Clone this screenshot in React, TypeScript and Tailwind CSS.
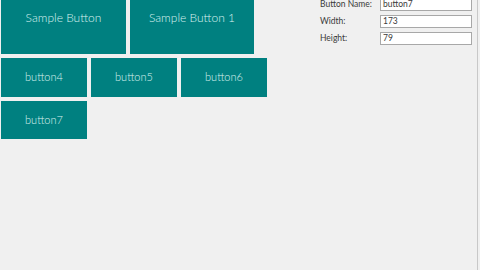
const font = { fontFamily: "'Lato', 'Open Sans', sans-serif" };

const Btn = ({ label, w, h, big }: { label: string; w: string; h: string; big?: boolean }) => (
  <div
    className={`${w} ${h} bg-[#008080] text-[#d8f0ee] font-light flex justify-center ${
      big ? "items-start pt-[9px] text-[12px]" : "items-center text-[11px]"
    }`}
  >
    {label}
  </div>
);

const Field = ({ label, value }: { label: string; value: string }) => (
  <div className="flex items-center h-[13px]">
    <span className="w-[60px] text-[8.5px] text-[#3a3a3a]">{label}</span>
    <div className="w-[92px] h-[13px] border border-[#a8a8a8] bg-white text-[8.5px] text-[#3a3a3a] pl-[2px] leading-[11px]">
      {value}
    </div>
  </div>
);

export default function App() {
  return (
    <div className="w-[480px] h-[270px] bg-[#f0f0f0] flex overflow-hidden" style={font}>
      <div className="w-[320px] pl-[1px] flex flex-col gap-[4px]">
        <div className="flex gap-[4px]">
          <Btn label="Sample Button" w="w-[125px]" h="h-[54px]" big />
          <Btn label="Sample Button 1" w="w-[124px]" h="h-[54px]" big />
        </div>
        <div className="flex gap-[4px]">
          <Btn label="button4" w="w-[86px]" h="h-[39px]" />
          <Btn label="button5" w="w-[86px]" h="h-[39px]" />
          <Btn label="button6" w="w-[86px]" h="h-[39px]" />
        </div>
        <div className="flex">
          <Btn label="button7" w="w-[86px]" h="h-[38px]" />
        </div>
      </div>
      <div className="w-[158px] mt-[-2px] flex flex-col gap-[4px] border-r border-[#c8c8c8]">
        <Field label="Button Name:" value="button7" />
        <Field label="Width:" value="173" />
        <Field label="Height:" value="79" />
      </div>
    </div>
  );
}
